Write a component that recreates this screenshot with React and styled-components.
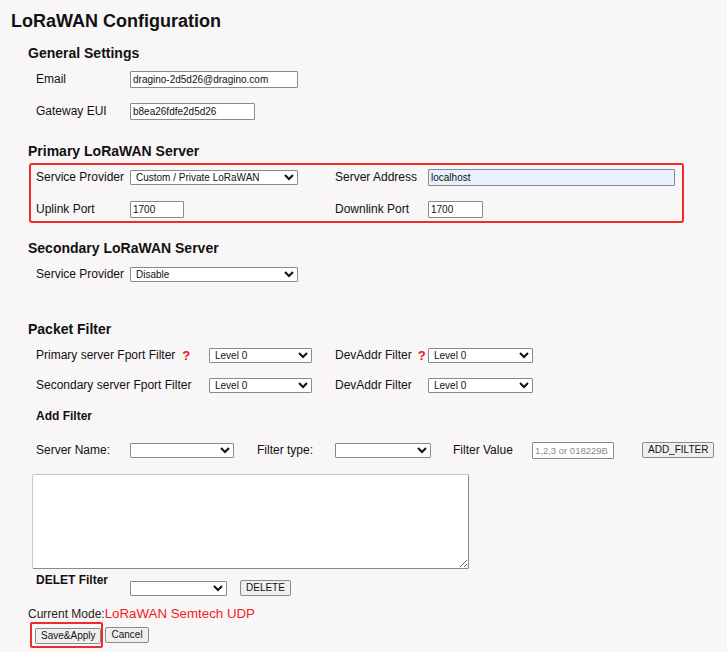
import React from 'react'
import styled, { createGlobalStyle } from 'styled-components'

const GlobalStyle = createGlobalStyle`
  html, body {
    margin: 0;
    padding: 0;
    background: #f9f6f7;
  }
  body {
    font-family: "Liberation Sans", Arial, sans-serif;
    color: #111;
  }
`

const Page = styled.div`
  display: flex;
  flex-direction: column;
  padding: 9px 0 6px 0;
  font-size: 12px;
`

const Title = styled.h2`
  margin: 0;
  padding-left: 11px;
  font-size: 18px;
  line-height: 24px;
  font-weight: bold;
`

const Heading = styled.h3`
  margin: ${(p) => p.$top || 0}px 0 0 28px;
  font-size: 14px;
  line-height: 20px;
  font-weight: bold;
`

const SubHeading = styled.h4`
  margin: ${(p) => p.$top || 0}px 0 0 36px;
  font-size: 12px;
  line-height: 20px;
  font-weight: bold;
`

const Row = styled.div`
  display: flex;
  align-items: center;
  height: ${(p) => p.$h || 32}px;
  padding-left: 36px;
  margin-top: ${(p) => p.$top || 0}px;
`

const Label = styled.span`
  width: ${(p) => p.$w || 94}px;
  flex-shrink: 0;
  font-size: 12px;
  white-space: nowrap;
`

const Help = styled.span`
  color: #e8141b;
  font-weight: bold;
  font-size: 13px;
  margin-left: ${(p) => p.$ml || 0}px;
`

const LabelWithHelp = styled.span`
  display: flex;
  align-items: center;
  width: ${(p) => p.$w}px;
  flex-shrink: 0;
  white-space: nowrap;
`

const TextInput = styled.input`
  box-sizing: border-box;
  width: ${(p) => p.$w}px;
  height: 17px;
  padding: 1px 2px;
  font-family: "Liberation Sans", Arial, sans-serif;
  font-size: 10px;
  color: #111;
  background: ${(p) => (p.$filled ? '#e8f0fe' : '#fff')};
  border: 1px solid #8a8a8a;
  border-radius: 1px;
  outline: none;
  flex-shrink: 0;

  &::placeholder {
    color: #8a8a8a;
    font-size: 9.5px;
  }
`

const Select = styled.select`
  box-sizing: border-box;
  width: ${(p) => p.$w}px;
  height: 15px;
  padding: 0 1px;
  font-family: "Liberation Sans", Arial, sans-serif;
  font-size: 10px;
  color: #111;
  background: #fff;
  border: 1px solid #8a8a8a;
  border-radius: 1px;
  flex-shrink: 0;
  margin-right: ${(p) => p.$mr || 0}px;
`

const Button = styled.button`
  box-sizing: border-box;
  height: 16px;
  padding: 0 5px;
  font-family: "Liberation Sans", Arial, sans-serif;
  font-size: 10px;
  line-height: 14px;
  color: #111;
  background: #efefef;
  border: 1px solid #8a8a8a;
  border-radius: 2px;
  flex-shrink: 0;
  margin-left: ${(p) => p.$ml || 0}px;
`

const ServerBox = styled.div`
  display: grid;
  grid-template-columns: 94px 205px 93px 1fr;
  grid-template-rows: 24px 24px;
  row-gap: 8px;
  align-items: center;
  width: 655px;
  box-sizing: border-box;
  margin: 2px 0 0 29px;
  padding-left: 5px;
  padding-right: 7px;
  border: 2px solid #ef2b2b;
  border-radius: 3px;
`

const Comment = styled.textarea`
  box-sizing: border-box;
  width: 437px;
  height: 95px;
  margin: 8px 0 0 32px;
  background: #fff;
  border: 1px solid #8a8a8a;
  border-top-color: #c8c8c8;
  border-left-color: #c8c8c8;
  border-radius: 2px;
  resize: both;
`

const DeleteRow = styled.div`
  display: flex;
  align-items: flex-start;
  padding-left: 36px;
  height: 35px;
`

const DeleteLabel = styled.span`
  width: 94px;
  margin-top: 4px;
  font-weight: bold;
  line-height: 14px;
`

const DeleteSelect = styled(Select)`
  margin-top: 12px;
  height: 15px;
`

const DeleteButton = styled(Button)`
  margin: 11px 0 0 13px;
`

const ModeLine = styled.div`
  margin: 2px 0 0 28px;
  line-height: 15px;
  font-size: 12px;
  color: #222;
`

const ModeValue = styled.span`
  color: #f01b1b;
  font-size: 13.3px;
`

const Actions = styled.div`
  display: flex;
  align-items: center;
  gap: 2px;
  margin: 0 0 0 30px;
`

const Highlight = styled.div`
  display: flex;
  padding: 4px 0 2px 3px;
  border: 2px solid #ef2b2b;
  border-radius: 2px;
`

export default function App() {
  return (
    <>
      <GlobalStyle />
      <Page>
        <Title>LoRaWAN Configuration</Title>

        <Heading $top={10}>General Settings</Heading>
        <Row>
          <Label>Email</Label>
          <TextInput $w={168} defaultValue="dragino-2d5d26@dragino.com" />
        </Row>
        <Row>
          <Label>Gateway EUI</Label>
          <TextInput $w={125} defaultValue="b8ea26fdfe2d5d26" />
        </Row>

        <Heading $top={14}>Primary LoRaWAN Server</Heading>
        <ServerBox>
          <Label>Service Provider</Label>
          <Select $w={168} defaultValue="custom">
            <option value="custom">Custom / Private LoRaWAN</option>
          </Select>
          <Label $w={93}>Server Address</Label>
          <TextInput $w={247} $filled defaultValue="localhost" />
          <Label>Uplink Port</Label>
          <TextInput $w={54} defaultValue="1700" />
          <Label $w={93}>Downlink Port</Label>
          <TextInput $w={55} defaultValue="1700" />
        </ServerBox>

        <Heading $top={15}>Secondary LoRaWAN Server</Heading>
        <Row>
          <Label>Service Provider</Label>
          <Select $w={168} defaultValue="disable">
            <option value="disable">Disable</option>
          </Select>
        </Row>

        <Heading $top={29}>Packet Filter</Heading>
        <Row $h={30} $top={1}>
          <LabelWithHelp $w={173}>
            Primary server Fport Filter<Help $ml={7}>?</Help>
          </LabelWithHelp>
          <Select $w={103} $mr={23}>
            <option>Level 0</option>
          </Select>
          <LabelWithHelp $w={93}>
            DevAddr Filter<Help $ml={6}>?</Help>
          </LabelWithHelp>
          <Select $w={105}>
            <option>Level 0</option>
          </Select>
        </Row>
        <Row $h={30}>
          <Label $w={173}>Secondary server Fport Filter</Label>
          <Select $w={103} $mr={23}>
            <option>Level 0</option>
          </Select>
          <Label $w={93}>DevAddr Filter</Label>
          <Select $w={105}>
            <option>Level 0</option>
          </Select>
        </Row>

        <SubHeading $top={6}>Add Filter</SubHeading>
        <Row $top={8}>
          <Label>Server Name:</Label>
          <Select $w={104} $mr={23}>
            <option></option>
          </Select>
          <Label $w={78}>Filter type:</Label>
          <Select $w={96} $mr={22}>
            <option></option>
          </Select>
          <Label $w={79}>Filter Value</Label>
          <TextInput $w={82} placeholder="1,2,3 or 018229B" />
          <Button $ml={28}>ADD_FILTER</Button>
        </Row>

        <Comment />

        <DeleteRow>
          <DeleteLabel>DELET Filter</DeleteLabel>
          <DeleteSelect $w={97}>
            <option></option>
          </DeleteSelect>
          <DeleteButton>DELETE</DeleteButton>
        </DeleteRow>

        <ModeLine>
          Current Mode:<ModeValue>LoRaWAN Semtech UDP</ModeValue>
        </ModeLine>
        <Actions>
          <Highlight>
            <Button>Save&amp;Apply</Button>
          </Highlight>
          <Button>Cancel</Button>
        </Actions>
      </Page>
    </>
  )
}
